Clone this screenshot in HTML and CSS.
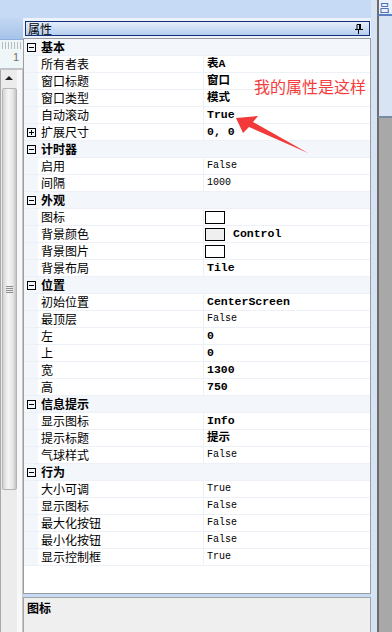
FILE: index.html
```html
<!DOCTYPE html>
<html lang="zh-CN">
<head>
    <meta charset="UTF-8">
    <meta name="viewport" content="width=device-width, initial-scale=1.0">
    <title>属性</title>
    <link rel="stylesheet" href="styles.css">
</head>
<body>
    <div class="screen">
        <div class="left">
            <div class="left-top"></div>
            <div class="left-tab"></div>
            <div class="ruler"><span class="ruler-num">1</span></div>
            <div class="scroll">
                <div class="vbar">
                    <div class="arrow-up"></div>
                    <div class="thumb"><div class="grip"></div></div>
                </div>
                <div class="scroll-gap"></div>
            </div>
        </div>

        <div class="panel">
            <div class="panel-top"></div>
            <div class="title-wrap">
                <div class="titlebar">
                    <span>属性</span>
                    <svg class="pin" width="8" height="10" viewBox="0 0 8 10">
                        <path d="M2 0.5h3.5v5H2z" fill="none" stroke="#000"/>
                        <path d="M5 0v5" stroke="#000" stroke-width="2"/>
                        <path d="M0 5.5h8M3.5 6v4" stroke="#000"/>
                    </svg>
                </div>
            </div>

            <div class="grid">
                <div class="row cat"><div class="gut"><svg class="exp" width="9" height="9"><rect x="0.5" y="0.5" width="8" height="8" fill="none" stroke="#000"/><path d="M2 4.5h5" stroke="#000"/></svg></div><div class="cname">基本</div></div>
                <div class="row"><div class="gut"></div><div class="name">所有者表</div><div class="val b">表A</div></div>
                <div class="row"><div class="gut"></div><div class="name">窗口标题</div><div class="val b">窗口</div></div>
                <div class="row"><div class="gut"></div><div class="name">窗口类型</div><div class="val b">模式</div></div>
                <div class="row"><div class="gut"></div><div class="name">自动滚动</div><div class="val b">True</div></div>
                <div class="row"><div class="gut plain"><svg class="exp" width="9" height="9"><rect x="0.5" y="0.5" width="8" height="8" fill="none" stroke="#000"/><path d="M2 4.5h5M4.5 2v5" stroke="#000"/></svg></div><div class="name">扩展尺寸</div><div class="val b">0, 0</div></div>

                <div class="row cat"><div class="gut"><svg class="exp" width="9" height="9"><rect x="0.5" y="0.5" width="8" height="8" fill="none" stroke="#000"/><path d="M2 4.5h5" stroke="#000"/></svg></div><div class="cname">计时器</div></div>
                <div class="row"><div class="gut"></div><div class="name">启用</div><div class="val">False</div></div>
                <div class="row"><div class="gut"></div><div class="name">间隔</div><div class="val">1000</div></div>

                <div class="row cat"><div class="gut"><svg class="exp" width="9" height="9"><rect x="0.5" y="0.5" width="8" height="8" fill="none" stroke="#000"/><path d="M2 4.5h5" stroke="#000"/></svg></div><div class="cname">外观</div></div>
                <div class="row"><div class="gut"></div><div class="name">图标</div><div class="val"><span class="swatch"></span></div></div>
                <div class="row"><div class="gut"></div><div class="name">背景颜色</div><div class="val b"><span class="swatch grey"></span>Control</div></div>
                <div class="row"><div class="gut"></div><div class="name">背景图片</div><div class="val"><span class="swatch"></span></div></div>
                <div class="row"><div class="gut"></div><div class="name">背景布局</div><div class="val b">Tile</div></div>

                <div class="row cat"><div class="gut"><svg class="exp" width="9" height="9"><rect x="0.5" y="0.5" width="8" height="8" fill="none" stroke="#000"/><path d="M2 4.5h5" stroke="#000"/></svg></div><div class="cname">位置</div></div>
                <div class="row"><div class="gut"></div><div class="name">初始位置</div><div class="val b">CenterScreen</div></div>
                <div class="row"><div class="gut"></div><div class="name">最顶层</div><div class="val">False</div></div>
                <div class="row"><div class="gut"></div><div class="name">左</div><div class="val b">0</div></div>
                <div class="row"><div class="gut"></div><div class="name">上</div><div class="val b">0</div></div>
                <div class="row"><div class="gut"></div><div class="name">宽</div><div class="val b">1300</div></div>
                <div class="row"><div class="gut"></div><div class="name">高</div><div class="val b">750</div></div>

                <div class="row cat"><div class="gut"><svg class="exp" width="9" height="9"><rect x="0.5" y="0.5" width="8" height="8" fill="none" stroke="#000"/><path d="M2 4.5h5" stroke="#000"/></svg></div><div class="cname">信息提示</div></div>
                <div class="row"><div class="gut"></div><div class="name">显示图标</div><div class="val b">Info</div></div>
                <div class="row"><div class="gut"></div><div class="name">提示标题</div><div class="val b">提示</div></div>
                <div class="row"><div class="gut"></div><div class="name">气球样式</div><div class="val">False</div></div>

                <div class="row cat"><div class="gut"><svg class="exp" width="9" height="9"><rect x="0.5" y="0.5" width="8" height="8" fill="none" stroke="#000"/><path d="M2 4.5h5" stroke="#000"/></svg></div><div class="cname">行为</div></div>
                <div class="row"><div class="gut"></div><div class="name">大小可调</div><div class="val">True</div></div>
                <div class="row"><div class="gut"></div><div class="name">显示图标</div><div class="val">False</div></div>
                <div class="row"><div class="gut"></div><div class="name">最大化按钮</div><div class="val">False</div></div>
                <div class="row"><div class="gut"></div><div class="name">最小化按钮</div><div class="val">False</div></div>
                <div class="row"><div class="gut"></div><div class="name">显示控制框</div><div class="val">True</div></div>
            </div>

            <div class="desc"><b>图标</b></div>
        </div>

        <div class="right">
            <div class="right-top">吕</div>
            <div class="right-blue"></div>
            <div class="right-grey"></div>
        </div>

        <div class="note">我的属性是这样</div>
        <svg class="arrow" width="392" height="632" viewBox="0 0 392 632">
            <polygon points="236,118 258,116 253,122 308,153 249,127 243,133" fill="#f23a3a"/>
        </svg>
    </div>
</body>
</html>
```

FILE: styles.css
```css
body {
    margin: 0;
    padding: 0;
    background-color: #c6daf5;
    font-family: "Noto Sans CJK SC", "Liberation Sans", sans-serif;
    font-size: 12px;
    color: #000;
}
.screen {
    position: relative;
    display: flex;
    width: 392px;
    height: 632px;
    overflow: hidden;
}

/* left side: ruler + scrollbar of the designer */
.left {
    width: 23px;
    display: flex;
    flex-direction: column;
}
.left-top {
    height: 18px;
}
.left-tab {
    height: 22px;
    background: linear-gradient(#c3d7f2, #a7c3ea);
    border-bottom: 1px solid #8eaedc;
    box-sizing: border-box;
}
.ruler {
    height: 30px;
    background-color: #eef6f8;
    background-image: repeating-linear-gradient(90deg, transparent 0, transparent 2px, #b8bcc0 2px, #b8bcc0 3px);
    background-size: 100% 7px;
    background-repeat: no-repeat;
    background-position: 0 2px;
    border-bottom: 2px solid #c0c4c8;
    box-sizing: border-box;
    position: relative;
}
.ruler-num {
    position: absolute;
    left: 13px;
    top: 11px;
    font-family: "Liberation Sans", sans-serif;
    font-size: 11px;
    color: #707070;
}
.scroll {
    flex: 1;
    display: flex;
}
.vbar {
    width: 17px;
    background-color: #ececec;
    border-left: 1px solid #a8a8a8;
    box-sizing: border-box;
    display: flex;
    flex-direction: column;
    align-items: center;
}
.arrow-up {
    margin-top: 6px;
    width: 0;
    height: 0;
    border-left: 4px solid transparent;
    border-right: 4px solid transparent;
    border-bottom: 4px solid #222;
}
.thumb {
    margin-top: 8px;
    width: 15px;
    height: 402px;
    background: linear-gradient(90deg, #d4d4d4, #f6f6f6 40%, #e6e6e6 75%, #c4c4c4);
    border: 1px solid #b4b4b4;
    border-radius: 2px;
    box-sizing: border-box;
    display: flex;
    align-items: center;
    justify-content: center;
}
.grip {
    width: 7px;
    height: 7px;
    background: repeating-linear-gradient(#8c8c8c 0, #8c8c8c 1px, transparent 1px, transparent 2px);
}
.scroll-gap {
    flex: 1;
    background-color: #f8f8f8;
    border-right: 1px solid #c8c8c8;
}

/* property panel */
.panel {
    width: 348px;
    display: flex;
    flex-direction: column;
}
.panel-top {
    height: 18px;
}
.title-wrap {
    padding: 3px 1px 2px 2px;
    background-color: #eef3fa;
}
.titlebar {
    height: 15px;
    box-sizing: border-box;
    border: 1px solid #12307a;
    background: linear-gradient(#e4eefb, #b6ceef);
    display: flex;
    align-items: center;
    justify-content: space-between;
    padding: 0 6px 0 2px;
    line-height: 13px;
}
.pin {
    display: block;
}
.grid {
    height: 556px;
    box-sizing: border-box;
    border: 1px solid #9c9c9c;
    background-color: #fff;
}
.row {
    display: flex;
    height: 17px;
    border-bottom: 1px solid #edf0f6;
    box-sizing: border-box;
    line-height: 16px;
}
.gut {
    width: 14px;
    flex-shrink: 0;
    background-color: #f3f6fb;
    display: flex;
    align-items: center;
    padding-left: 3px;
    box-sizing: border-box;
}
.exp {
    display: block;
}
.name {
    width: 166px;
    flex-shrink: 0;
    padding-left: 3px;
    box-sizing: border-box;
    border-right: 1px solid #edf0f6;
    white-space: nowrap;
}
.cat {
    background-color: #f3f6fb;
}
.cname {
    padding-left: 3px;
    font-weight: bold;
}
.val {
    flex: 1;
    padding-left: 3px;
    display: flex;
    align-items: center;
    font-family: "Liberation Mono", "Noto Sans CJK SC", monospace;
    font-size: 10px;
    white-space: nowrap;
}
.val.b {
    font-weight: bold;
    font-size: 11.5px;
}
.swatch {
    width: 20px;
    height: 13px;
    box-sizing: border-box;
    border: 1px solid #000;
    background-color: #fff;
    margin-left: -2px;
}
.swatch.grey {
    background-color: #efefef;
    margin-right: 8px;
}
.desc {
    flex: 1;
    margin-top: 3px;
    border: 1px solid #a4a4a4;
    border-bottom: none;
    background-color: #efefef;
    padding: 1px 3px;
}

/* right edge of the window */
.right {
    flex: 1;
    display: flex;
    flex-direction: column;
    border-left: 6px solid #d6e3f4;
    box-sizing: border-box;
}
.right-top {
    height: 14px;
    border-left: 2px solid #6c6c6c;
    background-color: #eaf1fa;
    border-bottom: 2px solid #5b7fc0;
    color: #2d58b0;
    font-size: 11px;
    line-height: 14px;
    box-sizing: content-box;
    overflow: hidden;
}
.right-blue {
    height: 100px;
    border-left: 2px solid #6c6c6c;
    background-color: #d8e4f4;
    border-bottom: 2px solid #7a8aa0;
}
.right-grey {
    flex: 1;
    border-left: 2px solid #6c6c6c;
    background-color: #a8a8a8;
}

/* red annotation */
.note {
    position: absolute;
    left: 254px;
    top: 76px;
    font-size: 16px;
    line-height: 20px;
    color: #f53c3c;
}
.arrow {
    position: absolute;
    left: 0;
    top: 0;
    pointer-events: none;
}
```
